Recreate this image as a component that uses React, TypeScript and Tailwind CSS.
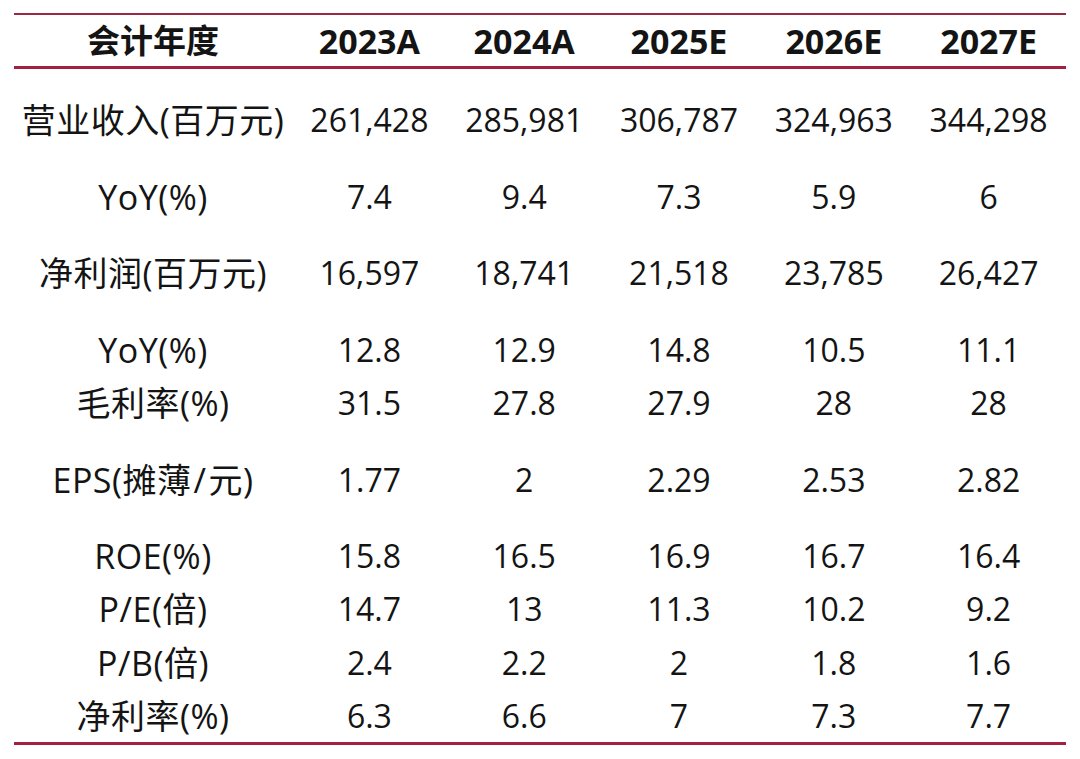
import React from "react";

const header = ["会计年度", "2023A", "2024A", "2025E", "2026E", "2027E"];

const rows: { label: React.ReactNode; vals: string[]; mt: string }[] = [
  { label: "营业收入(百万元)", vals: ["261,428", "285,981", "306,787", "324,963", "344,298"], mt: "mt-[24px]" },
  { label: "YoY(%)", vals: ["7.4", "9.4", "7.3", "5.9", "6"], mt: "mt-[24px]" },
  { label: "净利润(百万元)", vals: ["16,597", "18,741", "21,518", "23,785", "26,427"], mt: "mt-[23px]" },
  { label: "YoY(%)", vals: ["12.8", "12.9", "14.8", "10.5", "11.1"], mt: "mt-[24px]" },
  { label: "毛利率(%)", vals: ["31.5", "27.8", "27.9", "28", "28"], mt: "mt-0" },
  {
    label: (
      <>
        EPS(摊薄<span className="mx-[2px]">/</span>元)
      </>
    ),
    vals: ["1.77", "2", "2.29", "2.53", "2.82"],
    mt: "mt-[24px]",
  },
  { label: "ROE(%)", vals: ["15.8", "16.5", "16.9", "16.7", "16.4"], mt: "mt-[23px]" },
  { label: "P/E(倍)", vals: ["14.7", "13", "11.3", "10.2", "9.2"], mt: "mt-0" },
  { label: "P/B(倍)", vals: ["2.4", "2.2", "2", "1.8", "1.6"], mt: "mt-[1px]" },
  { label: "净利率(%)", vals: ["6.3", "6.6", "7", "7.3", "7.7"], mt: "mt-0" },
];

export default function App() {
  return (
    <div
      className="w-[1080px] h-[759px] bg-white overflow-hidden text-[#141414]"
      style={{ fontFamily: '"Open Sans", "Noto Sans CJK SC", sans-serif' }}
    >
      <div className="ml-[14px] w-[1052px] pt-[13px]">
        <div className="h-[2px] bg-[#9a2a43]" />
        <div className="grid grid-cols-[278px_repeat(5,1fr)] h-[51px] items-center font-bold">
          {header.map((h, i) => (
            <div key={i} className={`text-center leading-none ${i === 0 ? "text-[33px]" : "text-[34px]"}`}>
              {h}
            </div>
          ))}
        </div>
        <div className="h-[3px] bg-[#a3203f]" />
        {rows.map((r, i) => (
          <div
            key={i}
            className={`grid grid-cols-[278px_repeat(5,1fr)] h-[53px] items-center font-normal ${r.mt}`}
          >
            <div className="text-center leading-none text-[34px] tracking-[0.5px]">{r.label}</div>
            {r.vals.map((v, j) => (
              <div key={j} className="text-center leading-none text-[32px]">
                {v}
              </div>
            ))}
          </div>
        ))}
        <div className="h-[3px] bg-[#a3203f]" />
      </div>
    </div>
  );
}
